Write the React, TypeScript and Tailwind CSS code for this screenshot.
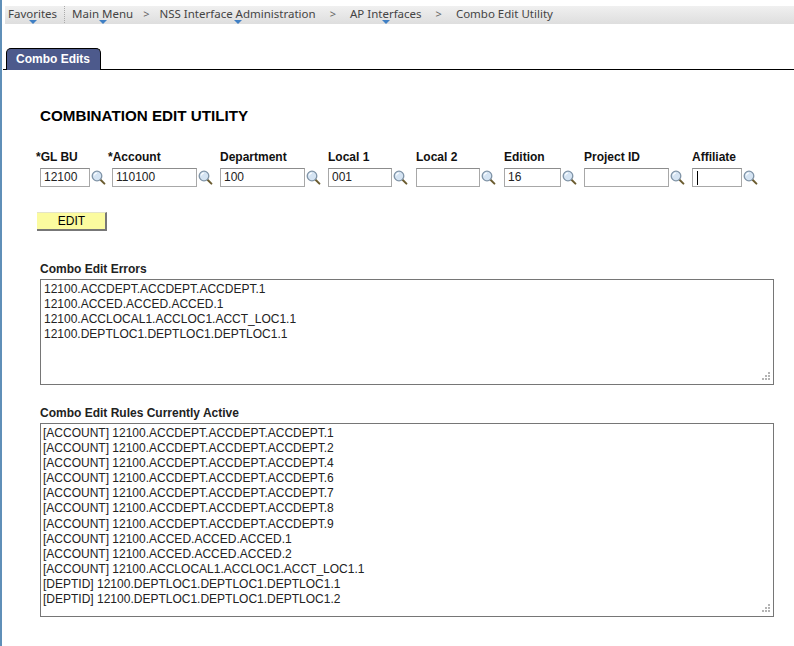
import React from "react";

const Caret = () => (
  <span className="absolute left-1/2 top-[14px] -ml-[4px] w-0 h-0 border-l-[4px] border-r-[4px] border-t-[4px] border-l-transparent border-r-transparent border-t-[#3f7fc4]" />
);

const Crumb = ({ children, menu }: { children: string; menu?: boolean }) => (
  <span className="relative whitespace-nowrap">
    {children}
    {menu ? <Caret /> : null}
  </span>
);

const Sep = ({ wide }: { wide?: boolean }) => (
  <span className={`text-[#666] text-[11px] ${wide ? "mx-[14px]" : "mx-[10px]"}`}>&gt;</span>
);

const Lens = () => (
  <svg width="15" height="15" viewBox="0 0 15 15" className="shrink-0">
    <path d="M9 9.2 L13.4 13.6" stroke="#6b5c30" strokeWidth="2" strokeLinecap="round" />
    <circle cx="6" cy="6" r="4.8" fill="#d5e4f3" stroke="#7f93a6" strokeWidth="1.3" />
    <path d="M3.4 5.4 A3 3 0 0 1 6 3" stroke="#ffffff" strokeWidth="1.2" fill="none" />
  </svg>
);

const Field = ({
  label,
  width,
  col,
  value,
  indent,
  caret,
}: {
  label: string;
  width: string;
  col: string;
  value?: string;
  indent?: string;
  caret?: boolean;
}) => (
  <div className={`${col} shrink-0`}>
    <div className="text-[12px] leading-[14px] font-bold text-[#111] whitespace-nowrap">{label}</div>
    <div className={`flex items-center gap-[1px] mt-[4px] ${indent ?? ""}`}>
      <div className={`${width} h-[19px] border border-[#a8a8a8] border-t-[#8c8c8c] bg-white pl-[3px] text-[12px] leading-[17px] text-[#222] flex items-center`}>
        {value}
        {caret ? <span className="w-px h-[14px] bg-black ml-[1px]" /> : null}
      </div>
      <Lens />
    </div>
  </div>
);

const Grip = () => (
  <svg width="9" height="9" viewBox="0 0 9 9" className="absolute right-[3px] bottom-[3px]">
    <g fill="#b4b4b4">
      <rect x="7" y="0" width="2" height="2" />
      <rect x="4" y="3" width="2" height="2" />
      <rect x="7" y="3" width="2" height="2" />
      <rect x="1" y="6" width="2" height="2" />
      <rect x="4" y="6" width="2" height="2" />
      <rect x="7" y="6" width="2" height="2" />
    </g>
  </svg>
);

const Box = ({ lines, height, pad }: { lines: string[]; height: string; pad: string }) => (
  <div className={`relative ${height} ${pad} w-[734px] border border-[#767676] bg-white text-[12px] leading-[15.1px] text-[#222]`}>
    {lines.map((l) => (
      <div key={l} className="whitespace-nowrap">{l}</div>
    ))}
    <Grip />
  </div>
);

const errors = [
  "12100.ACCDEPT.ACCDEPT.ACCDEPT.1",
  "12100.ACCED.ACCED.ACCED.1",
  "12100.ACCLOCAL1.ACCLOC1.ACCT_LOC1.1",
  "12100.DEPTLOC1.DEPTLOC1.DEPTLOC1.1",
];

const rules = [
  "[ACCOUNT] 12100.ACCDEPT.ACCDEPT.ACCDEPT.1",
  "[ACCOUNT] 12100.ACCDEPT.ACCDEPT.ACCDEPT.2",
  "[ACCOUNT] 12100.ACCDEPT.ACCDEPT.ACCDEPT.4",
  "[ACCOUNT] 12100.ACCDEPT.ACCDEPT.ACCDEPT.6",
  "[ACCOUNT] 12100.ACCDEPT.ACCDEPT.ACCDEPT.7",
  "[ACCOUNT] 12100.ACCDEPT.ACCDEPT.ACCDEPT.8",
  "[ACCOUNT] 12100.ACCDEPT.ACCDEPT.ACCDEPT.9",
  "[ACCOUNT] 12100.ACCED.ACCED.ACCED.1",
  "[ACCOUNT] 12100.ACCED.ACCED.ACCED.2",
  "[ACCOUNT] 12100.ACCLOCAL1.ACCLOC1.ACCT_LOC1.1",
  "[DEPTID] 12100.DEPTLOC1.DEPTLOC1.DEPTLOC1.1",
  "[DEPTID] 12100.DEPTLOC1.DEPTLOC1.DEPTLOC1.2",
];

export default function App() {
  return (
    <div className="w-[794px] h-[646px] overflow-hidden bg-white border-l-2 border-l-[#5f8fb8] pl-[1px] font-['Liberation_Sans',Arial,sans-serif]">
      <div className="pt-[6px] pl-[2px]">
        <div className="h-[18px] flex items-center pl-[3px] pb-[2px] bg-gradient-to-b from-[#f0f0f0] to-[#dedede] text-[11.5px] text-[#444] font-['Noto_Sans',sans-serif] leading-[16px]">
          <Crumb menu>Favorites</Crumb>
          <span className="h-[17px] border-l border-dotted border-[#aaa] ml-[7px] mr-[7px]" />
          <Crumb menu>Main Menu</Crumb>
          <Sep />
          <Crumb menu>NSS Interface Administration</Crumb>
          <Sep wide />
          <Crumb menu>AP Interfaces</Crumb>
          <Sep wide />
          <Crumb>Combo Edit Utility</Crumb>
        </div>
      </div>

      <div className="mt-[24px] pl-[3px] border-b border-b-black h-[22px] w-full">
        <div className="w-[95px] h-[22px] rounded-t-[5px] border border-black border-b-0 bg-[#4d5a8c] text-white text-[12px] font-bold leading-[20px] pl-[9px]">
          Combo Edits
        </div>
      </div>

      <div className="pl-[33px]">
        <h1 className="mt-[37px] ml-[4px] text-[15.2px] leading-[17px] font-bold text-black whitespace-nowrap">COMBINATION EDIT UTILITY</h1>

        <div className="flex mt-[26px]">
          <Field label="*GL BU" col="w-[72px]" width="w-[50px]" value="12100" indent="ml-[4px]" />
          <Field label="*Account" col="w-[112px]" width="w-[85px]" value="110100" indent="ml-[4px]" />
          <Field label="Department" col="w-[108px]" width="w-[85px]" value="100" />
          <Field label="Local 1" col="w-[88px]" width="w-[64px]" value="001" />
          <Field label="Local 2" col="w-[88px]" width="w-[64px]" />
          <Field label="Edition" col="w-[80px]" width="w-[57px]" value="16" />
          <Field label="Project ID" col="w-[108px]" width="w-[85px]" />
          <Field label="Affiliate" col="w-[70px]" width="w-[50px]" caret />
        </div>

        <button className="block mt-[25px] ml-[1px] pl-[1px] pb-[1px] w-[70px] h-[19px] bg-[#fbfb9f] border-r-2 border-b-2 border-r-[#777] border-b-[#777] border-t border-t-[#e4e4c8] text-[12px] leading-[14px] text-black text-center">
          EDIT
        </button>

        <div className="ml-[4px] mt-[31px] text-[12px] leading-[14px] font-bold text-[#222]">Combo Edit Errors</div>
        <div className="ml-[4px] mt-[3px]">
          <Box lines={errors} height="h-[106px]" pad="pl-[3px] pt-[2px]" />
        </div>

        <div className="ml-[4px] mt-[21px] text-[12px] leading-[14px] font-bold text-[#222]">Combo Edit Rules Currently Active</div>
        <div className="ml-[4px] mt-[3px]">
          <Box lines={rules} height="h-[194px]" pad="pl-[2px] pt-[2px]" />
        </div>
      </div>
    </div>
  );
}
